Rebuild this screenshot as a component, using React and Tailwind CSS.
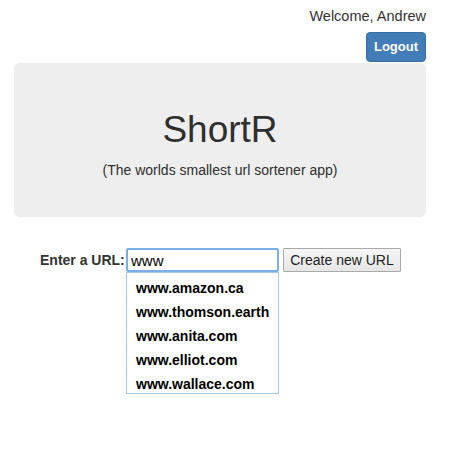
const suggestions = [
  'www.amazon.ca',
  'www.thomson.earth',
  'www.anita.com',
  'www.elliot.com',
  'www.wallace.com',
]

const App = () => {
  return (
    <div className="w-[452px] min-h-[466px] bg-white text-[#333] font-['Liberation_Sans',Arial,sans-serif] text-[14px]">
      {/* Header */}
      <div className="flex flex-col items-end pr-[26px] pt-[6px]">
        <div className="h-[20px] leading-[20px] text-[14.5px]">Welcome, Andrew</div>
        <button className="mt-[6px] w-[60px] h-[30px] rounded-[4px] bg-[#437db8] border border-[#3a6fa5] text-white text-[13px] font-bold">
          Logout
        </button>
      </div>

      {/* Jumbotron */}
      <div className="ml-[14px] mr-[26px] mt-[1px] h-[154px] rounded-[6px] bg-[#eeeeee] flex flex-col items-center justify-center">
        <h1 className="text-[37px] leading-[40px] mt-[10px] text-[#2f2f2f]">ShortR</h1>
        <p className="mt-[10px] text-[14px] leading-[20px] text-[#2f2f2f]">(The worlds smallest url sortener app)</p>
      </div>

      {/* Form */}
      <div className="mt-[31px] flex items-center pl-[40px]">
        <label className="font-bold text-[14px] w-[86px]">Enter a URL:</label>
        <div className="relative">
          <input
            readOnly
            value="www"
            className="w-[153px] h-[24px] px-[3px] border-2 border-[#7aaee8] outline-none text-[15px] text-black rounded-[2px]"
          />
          <div className="absolute left-0 top-[24px] w-[153px] h-[122px] bg-white border border-[#a5c8ec] pl-[9px] pt-[3px]">
            {suggestions.map((s) => (
              <div key={s} className="h-[24px] leading-[24px] font-bold text-[14px] text-black">
                {s}
              </div>
            ))}
          </div>
        </div>
        <button className="ml-[4px] w-[118px] h-[24px] border border-[#a9a9a9] bg-gradient-to-b from-[#f6f6f6] to-[#e6e6e6] text-[14px] text-[#222] rounded-[1px]">
          Create new URL
        </button>
      </div>
    </div>
  )
}

export default App
